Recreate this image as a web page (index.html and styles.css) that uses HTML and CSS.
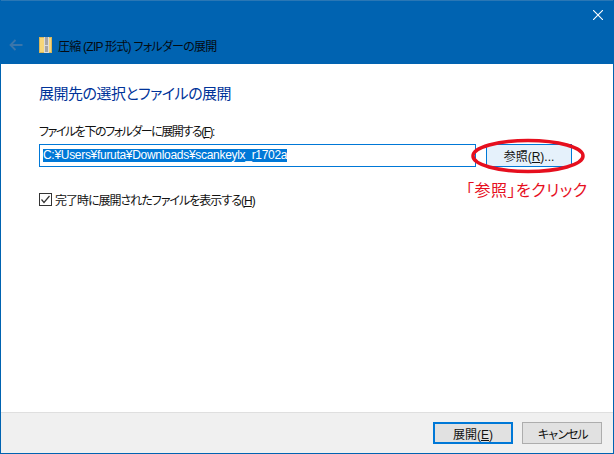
FILE: index.html
```html
<!DOCTYPE html>
<html lang="ja">
<head>
<meta charset="utf-8">
<title>圧縮 (ZIP 形式) フォルダーの展開</title>
<link rel="stylesheet" href="styles.css">
</head>
<body>
<div class="window">
  <header class="header">
    <div class="titlebar">
      <svg class="close" width="10" height="10" viewBox="0 0 10 10"><path d="M0 0L10 10M10 0L0 10" stroke="#fff" stroke-width="1.1" fill="none"/></svg>
    </div>
    <div class="navbar">
      <svg class="back" width="14" height="12" viewBox="0 0 14 12"><path d="M6.5 1L1.5 6L6.5 11M1.5 6H13.5" stroke="#3a76ab" stroke-width="1.8" fill="none"/></svg>
      <svg class="zip" width="13" height="16" viewBox="0 0 13 16">
        <rect x="0.5" y="0.5" width="12" height="15" fill="#f6d779" stroke="#d9b65a"/>
        <rect x="5" y="0" width="5" height="16" fill="#dcdcdc"/>
        <path d="M6 1h3M6 3h3M6 5h3M6 7h3M6 10h3M6 12h3M6 14h3" stroke="#6f6f6f" stroke-width="1"/>
      </svg>
      <span class="title">圧縮 (ZIP 形式) フォルダーの展開</span>
    </div>
  </header>
  <main class="content">
    <h1 class="heading">展開先の選択とファイルの展開</h1>
    <label class="label">ファイルを下のフォルダーに展開する(<u>F</u>):</label>
    <div class="path-row">
      <div class="path-input"><span class="selected">C:¥Users¥furuta¥Downloads¥scankeylx_r1702a</span></div>
      <button class="btn browse">参照(<u>R</u>)...</button>
    </div>
    <div class="note-row">「参照」をクリック</div>
    <div class="check-row">
      <svg class="checkbox" width="13" height="13" viewBox="0 0 13 13"><rect x="0.5" y="0.5" width="12" height="12" fill="#fff" stroke="#333"/><path d="M2.5 6.5L5 9.5L10.5 3" stroke="#333" stroke-width="1.2" fill="none"/></svg>
      <span class="check-label">完了時に展開されたファイルを表示する(<u>H</u>)</span>
    </div>
    <svg class="ellipse" width="120" height="40" viewBox="0 0 120 40"><ellipse cx="60" cy="20" rx="55" ry="15.5" fill="none" stroke="#e60f1e" stroke-width="3.5"/></svg>
  </main>
  <footer class="footer">
    <button class="btn primary">展開(<u>E</u>)</button>
    <button class="btn cancel">キャンセル</button>
  </footer>
</div>
</body>
</html>
```

FILE: styles.css
```css
* { box-sizing: border-box; }
html, body { margin: 0; padding: 0; background: #fff; }
body {
  font-family: "Liberation Sans", "Noto Sans CJK JP", sans-serif;
  font-size: 12px;
  color: #111;
  font-feature-settings: "palt";
}
.window {
  width: 614px;
  height: 454px;
  display: flex;
  flex-direction: column;
  border: 1px solid #0063b1;
  border-top: 0;
  position: relative;
  overflow: hidden;
}
.header { height: 64px; background: #0063b1; border-top: 1px solid #2a77b5; flex: none; }
.titlebar { height: 29px; display: flex; justify-content: flex-end; align-items: flex-start; padding: 9px 10px 0 0; }
.navbar { height: 30px; display: flex; align-items: center; padding-left: 8px; }
.back { margin-right: 16px; }
.zip { margin-right: 6px; }
.title { font-size: 12px; color: #050a10; white-space: nowrap; letter-spacing: -0.75px; }
.content { flex: 1; position: relative; padding: 19px 25px 0 38px; }
.heading { margin: 0; font-size: 15px; font-weight: 400; line-height: 22px; color: #003399; letter-spacing: -0.5px; }
.label { display: block; margin-top: 18px; line-height: 18px; white-space: nowrap; letter-spacing: -1.45px; }
.path-row { display: flex; gap: 10px; margin-top: 3px; height: 23px; }
.path-input {
  width: 437px;
  border: 1px solid #0078d7;
  padding: 4px 3px 0 3px;
  line-height: 13px;
}
.selected { background: #0078d7; color: #fff; display: inline-block; height: 13px; white-space: nowrap; letter-spacing: -0.3px; }
.btn {
  font-family: inherit;
  font-size: 12px;
  color: #111;
  padding: 0;
  width: 80px;
  background: #e1e1e1;
  border: 1px solid #adadad;
}
.browse { width: 86px; background: #e5f1fb; border: 1px solid #0078d7; }
.note-row { margin-top: 14px; padding-left: 427px; color: #e60f1e; font-size: 16px; line-height: 20px; white-space: nowrap; letter-spacing: 0.5px; }
.check-row { display: flex; align-items: center; gap: 3px; margin-top: -12px; height: 20px; }
.check-label { white-space: nowrap; letter-spacing: -1px; }
.ellipse { position: absolute; left: 467px; top: 72px; }
.footer {
  height: 41px;
  flex: none;
  background: #f0f0f0;
  border-top: 1px solid #dfdfdf;
  display: flex;
  justify-content: flex-end;
  align-items: flex-start;
  gap: 9px;
  padding: 9px 11px 0 0;
}
.footer .btn { height: 22px; }
.primary { border: 2px solid #0078d7; }
.cancel { letter-spacing: -2.2px; }
```
